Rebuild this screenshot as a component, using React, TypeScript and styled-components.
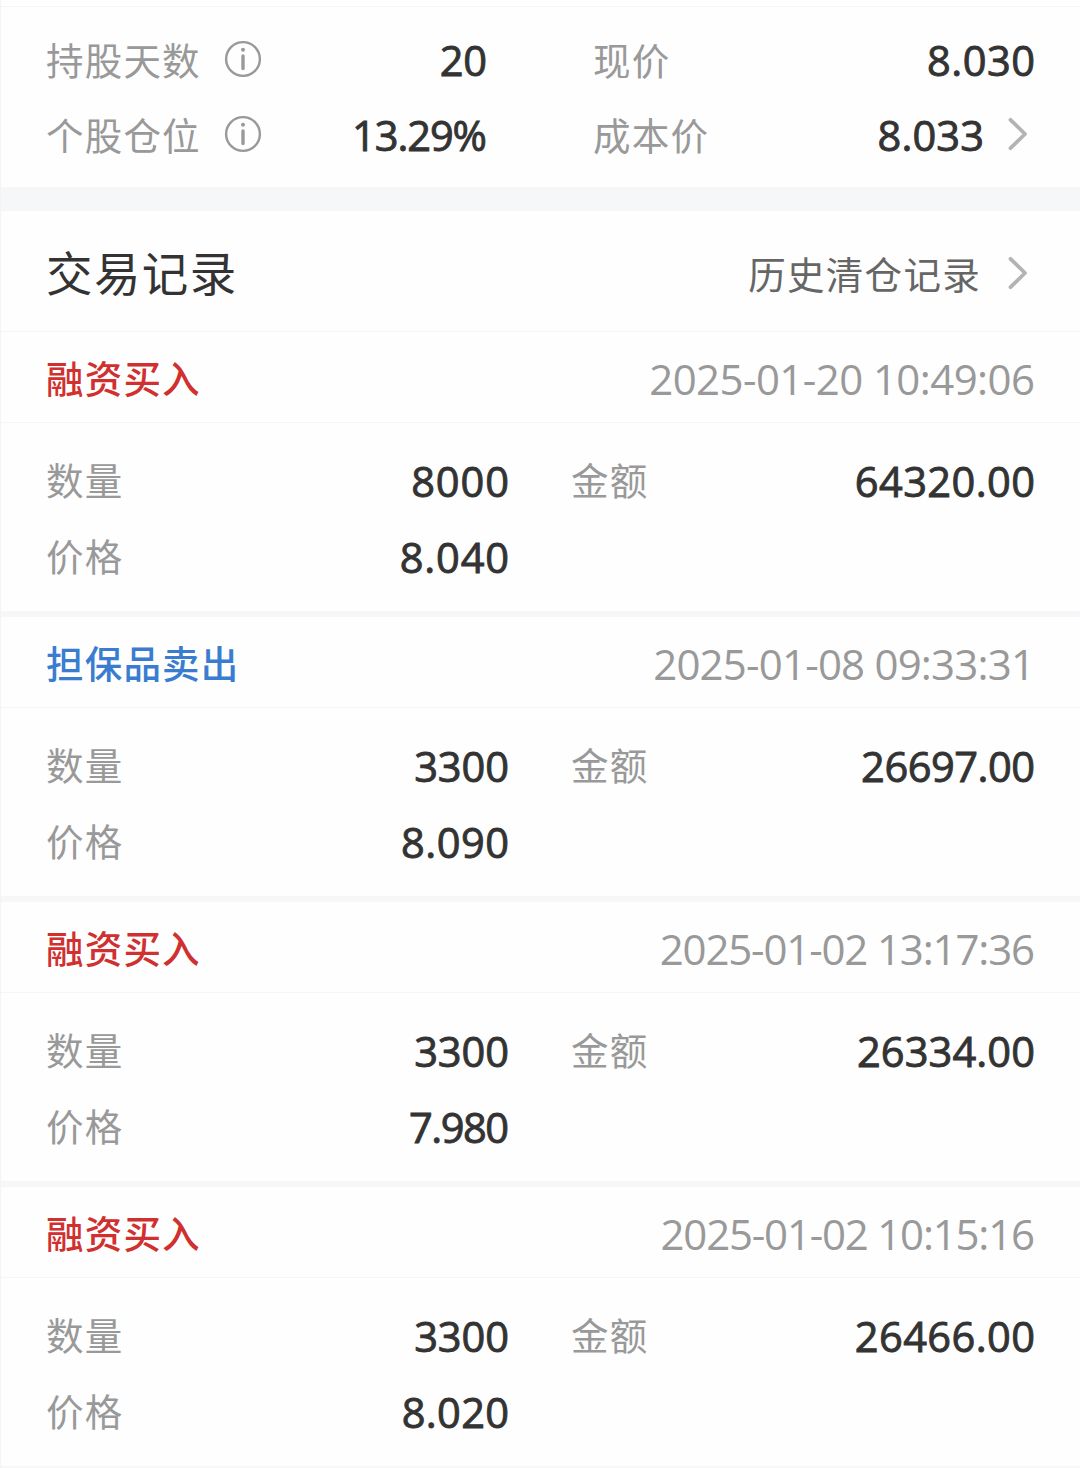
import React from "react";
import styled, { createGlobalStyle } from "styled-components";

const GlobalStyle = createGlobalStyle`
  *, *::before, *::after { box-sizing: border-box; }
  body {
    margin: 0;
    background: #fefefe;
    font-family: "Open Sans", "Noto Sans CJK SC", sans-serif;
    overflow: hidden;
  }
`;

const cjk = `"Noto Sans CJK SC", sans-serif`;

const Page = styled.main`
  width: 1080px;
  height: 1468px;
  overflow: hidden;
  background: #fefefe;
  border-left: 1px solid #f4f4f6;
`;

const Summary = styled.section`
  height: 187px;
  padding-top: 6px;
`;

const SummaryGrid = styled.div`
  border-top: 1px solid #f5f5f6;
  padding: 15px 45px 0 45px;
  display: grid;
  grid-template-columns: 441px 442px;
  column-gap: 106px;
  grid-auto-rows: 75px;
`;

const Field = styled.div`
  display: flex;
  align-items: center;
  justify-content: space-between;
`;

const Svg = styled.svg`
  display: block;
  flex: none;
`;

const LabelGroup = styled.div`
  display: flex;
  align-items: center;
  gap: 23px;

  ${Svg} {
    margin-bottom: 1px;
  }
`;

const Label = styled.span`
  padding-bottom: 2px;
  font-family: ${cjk};
  font-size: 37.5px;
  line-height: 54px;
  letter-spacing: 1.2px;
  color: #999;
  white-space: nowrap;
`;

const ValueGroup = styled.div`
  display: flex;
  align-items: center;
  gap: 24px;
  padding-right: 7px;

  ${Svg} {
    margin-bottom: 2px;
  }
`;

const Value = styled.span<{ $track?: number }>`
  padding-top: 1px;
  font-size: 41.6px;
  font-weight: 500;
  line-height: 54px;
  color: #333;
  -webkit-text-stroke: 0.9px #333;
  letter-spacing: ${(p) => p.$track ?? 0}px;
  margin-right: ${(p) => -(p.$track ?? 0)}px;
  white-space: nowrap;
`;

const Band = styled.div<{ $size: number }>`
  height: ${(p) => p.$size}px;
  background: #f6f7f9;
`;

const SectionHeader = styled.header`
  height: 121px;
  padding: 0 52px 0 45px;
  display: flex;
  align-items: center;
  justify-content: space-between;
  border-bottom: 1px solid #f4f5f6;
`;

const Title = styled.h1`
  margin: 0;
  padding-bottom: 1px;
  font-family: ${cjk};
  font-size: 46.5px;
  font-weight: 400;
  line-height: 66px;
  letter-spacing: 1.4px;
  color: #333;
`;

const HistoryLink = styled.a`
  display: flex;
  align-items: center;
  gap: 27px;
  padding-top: 3px;
  font-family: ${cjk};
  font-size: 37.5px;
  line-height: 54px;
  letter-spacing: 1.3px;
  color: #666;
`;

const RecordHeader = styled.header`
  height: 91px;
  padding: 0 45px;
  display: flex;
  align-items: center;
  justify-content: space-between;
  border-bottom: 1px solid #f6f6f7;
`;

const Kind = styled.strong<{ $side: Side }>`
  font-family: ${cjk};
  font-size: 37.5px;
  font-weight: 500;
  line-height: 54px;
  letter-spacing: 1.2px;
  color: ${(p) => (p.$side === "buy" ? "#d0302f" : "#3a7dd0")};
`;

const Time = styled.time<{ $track: number }>`
  padding-top: 3px;
  font-size: 42px;
  font-weight: 400;
  line-height: 54px;
  color: #999;
  letter-spacing: ${(p) => p.$track}px;
  margin-right: ${(p) => -p.$track}px;
`;

const RecordBody = styled.div`
  height: 188px;
  padding: 19px 45px 0;
  display: grid;
  grid-template-columns: 463px 464px;
  column-gap: 62px;
  grid-auto-rows: 76px;
`;

const InfoIcon = () => (
  <Svg width="38" height="38" viewBox="0 0 38 38" fill="none" stroke="#999">
    <circle cx="19" cy="19" r="16.9" strokeWidth="2.4" />
    <circle cx="19" cy="9.8" r="2" fill="#999" stroke="none" />
    <path d="M19 16v12.5" strokeWidth="3.4" strokeLinecap="round" />
  </Svg>
);

const Chevron = () => (
  <Svg width="20" height="34" viewBox="0 0 20 34" fill="none" stroke="#b3b3b3">
    <path
      d="M2.5 2.8 17 17 2.5 31.2"
      strokeWidth="3.8"
      strokeLinecap="round"
      strokeLinejoin="round"
    />
  </Svg>
);

type Side = "buy" | "sell";
type Num = { text: string; track: number };
type Trade = { side: Side; kind: string; time: Num; count: Num; amount: Num; price: Num };

const trades: Trade[] = [
  {
    side: "buy",
    kind: "融资买入",
    time: { text: "2025-01-20 10:49:06", track: -0.58 },
    count: { text: "8000", track: 0.9 },
    amount: { text: "64320.00", track: 0.4 },
    price: { text: "8.040", track: 0.8 },
  },
  {
    side: "sell",
    kind: "担保品卖出",
    time: { text: "2025-01-08 09:33:31", track: -0.8 },
    count: { text: "3300", track: -0.1 },
    amount: { text: "26697.00", track: -0.5 },
    price: { text: "8.090", track: 0.5 },
  },
  {
    side: "buy",
    kind: "融资买入",
    time: { text: "2025-01-02 13:17:36", track: -1.16 },
    count: { text: "3300", track: -0.1 },
    amount: { text: "26334.00", track: 0.1 },
    price: { text: "7.980", track: -1.5 },
  },
  {
    side: "buy",
    kind: "融资买入",
    time: { text: "2025-01-02 10:15:16", track: -1.21 },
    count: { text: "3300", track: -0.1 },
    amount: { text: "26466.00", track: 0.4 },
    price: { text: "8.020", track: 0.3 },
  },
];

const Entry = ({ label, num }: { label: string; num: Num }) => (
  <Field>
    <Label>{label}</Label>
    <Value $track={num.track}>{num.text}</Value>
  </Field>
);

const Record = ({ trade }: { trade: Trade }) => (
  <article>
    <RecordHeader>
      <Kind $side={trade.side}>{trade.kind}</Kind>
      <Time $track={trade.time.track}>{trade.time.text}</Time>
    </RecordHeader>
    <RecordBody>
      <Entry label="数量" num={trade.count} />
      <Entry label="金额" num={trade.amount} />
      <Entry label="价格" num={trade.price} />
    </RecordBody>
    <Band $size={6} />
  </article>
);

export default function App() {
  return (
    <>
      <GlobalStyle />
      <Page>
        <Summary>
          <SummaryGrid>
            <Field>
              <LabelGroup>
                <Label>持股天数</Label>
                <InfoIcon />
              </LabelGroup>
              <Value $track={-0.4}>20</Value>
            </Field>
            <Entry label="现价" num={{ text: "8.030", track: 0.5 }} />
            <Field>
              <LabelGroup>
                <Label>个股仓位</Label>
                <InfoIcon />
              </LabelGroup>
              <Value $track={-1.1}>13.29%</Value>
            </Field>
            <Field>
              <Label>成本价</Label>
              <ValueGroup>
                <Value $track={0.1}>8.033</Value>
                <Chevron />
              </ValueGroup>
            </Field>
          </SummaryGrid>
        </Summary>
        <Band $size={24} />
        <SectionHeader>
          <Title>交易记录</Title>
          <HistoryLink>
            历史清仓记录
            <Chevron />
          </HistoryLink>
        </SectionHeader>
        {trades.map((trade) => (
          <Record key={trade.time.text} trade={trade} />
        ))}
      </Page>
    </>
  );
}
